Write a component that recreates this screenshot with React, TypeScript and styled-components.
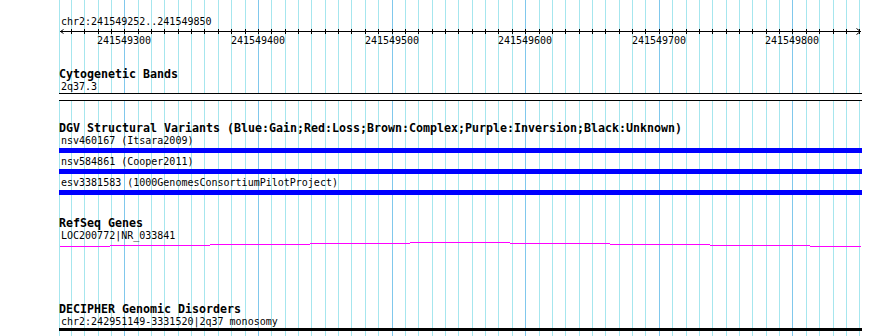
import React from "react";
import styled, { createGlobalStyle } from "styled-components";

const START = 241549252;
const END = 241549850;
const SCALE = 1.3364; // px per bp
const ORIGIN = 1.15; // panel x of START
const PANEL_WIDTH = 803;

const mono = `"DejaVu Sans Mono", "Liberation Mono", monospace`;

const toX = (bp: number) => Math.round(ORIGIN + (bp - START) * SCALE);

const tenths: number[] = [];
for (let bp = Math.ceil(START / 10) * 10; bp <= END; bp += 10) tenths.push(bp);
const hundreds = tenths.filter((bp) => bp % 100 === 0);

const geneSteps = [
  { from: 1, to: 51, y: 5 },
  { from: 51, to: 151, y: 4 },
  { from: 151, to: 251, y: 3 },
  { from: 251, to: 351, y: 2 },
  { from: 351, to: 451, y: 1 },
  { from: 451, to: 551, y: 2 },
  { from: 551, to: 651, y: 3 },
  { from: 651, to: 751, y: 4 },
  { from: 751, to: 802, y: 5 },
];

const variants = [
  "nsv460167 (Itsara2009)",
  "nsv584861 (Cooper2011)",
  "esv3381583 (1000GenomesConsortiumPilotProject)",
];

const GlobalStyle = createGlobalStyle`
  html, body {
    margin: 0;
    padding: 0;
    background: #ffffff;
  }
`;

const Canvas = styled.div`
  width: 890px;
  height: 336px;
  overflow: hidden;
  padding-left: 59px;
  box-sizing: border-box;
  background: #ffffff;
  font-family: ${mono};
  color: #000000;
`;

const Panel = styled.div`
  position: relative;
  width: ${PANEL_WIDTH}px;
  height: 336px;
`;

const GridLayer = styled.svg`
  position: absolute;
  top: 0;
  left: 0;
  width: ${PANEL_WIDTH}px;
  height: 336px;
  pointer-events: none;
`;

const Tracks = styled.div`
  position: relative;
  display: flex;
  flex-direction: column;
`;

const RulerTitle = styled.div`
  margin-top: 16px;
  height: 12px;
  line-height: 12px;
  font-size: 10px;
  padding-left: 2px;
  white-space: nowrap;
`;

const AxisRow = styled.div`
  position: relative;
  height: 18px;
`;

const AxisSvg = styled.svg`
  display: block;
  width: ${PANEL_WIDTH}px;
  height: 8px;
`;

const TickLabel = styled.span`
  position: absolute;
  top: 7px;
  width: 60px;
  margin-left: -30px;
  text-align: center;
  font-size: 10px;
  line-height: 12px;
`;

const TrackTitle = styled.div<{ $gap: number }>`
  margin-top: ${(p) => p.$gap}px;
  height: 13px;
  box-sizing: border-box;
  padding-top: 1px;
  line-height: 13px;
  font-size: 11.63px;
  font-weight: bold;
  white-space: nowrap;
`;

const FeatureLabel = styled.div`
  height: 12px;
  box-sizing: border-box;
  padding: 1px 0 0 2px;
  line-height: 12px;
  font-size: 10px;
  white-space: nowrap;
`;

const BandBox = styled.div`
  margin-top: 1px;
  height: 8px;
  box-sizing: border-box;
  border-top: 1px solid #000000;
  border-bottom: 1px solid #000000;
  background: #ffffff;
`;

const VariantList = styled.div`
  display: flex;
  flex-direction: column;
  gap: 2px;
`;

const VariantBar = styled.div`
  margin-top: 2px;
  height: 5px;
  background: #0000ff;
`;

const GeneSvg = styled.svg`
  display: block;
  width: ${PANEL_WIDTH}px;
  height: 7px;
`;

const DisorderBar = styled.div`
  margin-top: 1px;
  height: 3px;
  background: #000000;
`;

const Grid = () => (
  <GridLayer viewBox={`0 0 ${PANEL_WIDTH} 336`}>
    <rect x={0} y={0} width={1} height={336} fill="#a6e6ee" />
    {tenths.map((bp) => (
      <rect
        key={bp}
        x={toX(bp)}
        y={0}
        width={1}
        height={336}
        fill={bp % 100 === 0 ? "#80c8ec" : "#a6e6ee"}
      />
    ))}
  </GridLayer>
);

const Ruler = () => {
  const end = toX(END) + 2;
  return (
    <>
      <RulerTitle>chr2:241549252..241549850</RulerTitle>
      <AxisRow>
        <AxisSvg viewBox={`0 0 ${PANEL_WIDTH} 8`}>
          <rect x={1} y={3} width={end - 1} height={1} fill="#000" />
          <path d="M1.5 3.5 L4.5 1.5 M1.5 3.5 L4.5 5.5" stroke="#000" strokeWidth={1} fill="none" />
          <path
            d={`M${end - 4.5} 0.5 L${end - 0.5} 3.5 L${end - 4.5} 6.5`}
            stroke="#000"
            strokeWidth={1}
            fill="none"
          />
          {tenths.map((bp) => (
            <rect key={bp} x={toX(bp)} y={1} width={1} height={5} fill="#000" />
          ))}
        </AxisSvg>
        {hundreds.map((bp) => (
          <TickLabel key={bp} style={{ left: toX(bp) }}>
            {bp}
          </TickLabel>
        ))}
      </AxisRow>
    </>
  );
};

const App = () => {
  return (
    <Canvas>
      <GlobalStyle />
      <Panel>
        <Grid />
        <Tracks>
          <Ruler />

          <TrackTitle $gap={21}>Cytogenetic Bands</TrackTitle>
          <FeatureLabel>2q37.3</FeatureLabel>
          <BandBox />

          <TrackTitle $gap={20}>
            DGV Structural Variants (Blue:Gain;Red:Loss;Brown:Complex;Purple:Inversion;Black:Unknown)
          </TrackTitle>
          <VariantList>
            {variants.map((v) => (
              <div key={v}>
                <FeatureLabel>{v}</FeatureLabel>
                <VariantBar />
              </div>
            ))}
          </VariantList>

          <TrackTitle $gap={21}>RefSeq Genes</TrackTitle>
          <FeatureLabel>LOC200772|NR_033841</FeatureLabel>
          <GeneSvg viewBox={`0 0 ${PANEL_WIDTH} 7`}>
            {geneSteps.map((s) => (
              <rect key={s.from} x={s.from} y={s.y} width={s.to - s.from} height={1} fill="#ff00ff" />
            ))}
          </GeneSvg>

          <TrackTitle $gap={54}>DECIPHER Genomic Disorders</TrackTitle>
          <FeatureLabel>chr2:242951149-3331520|2q37 monosomy</FeatureLabel>
          <DisorderBar />
        </Tracks>
      </Panel>
    </Canvas>
  );
};

export default App;
